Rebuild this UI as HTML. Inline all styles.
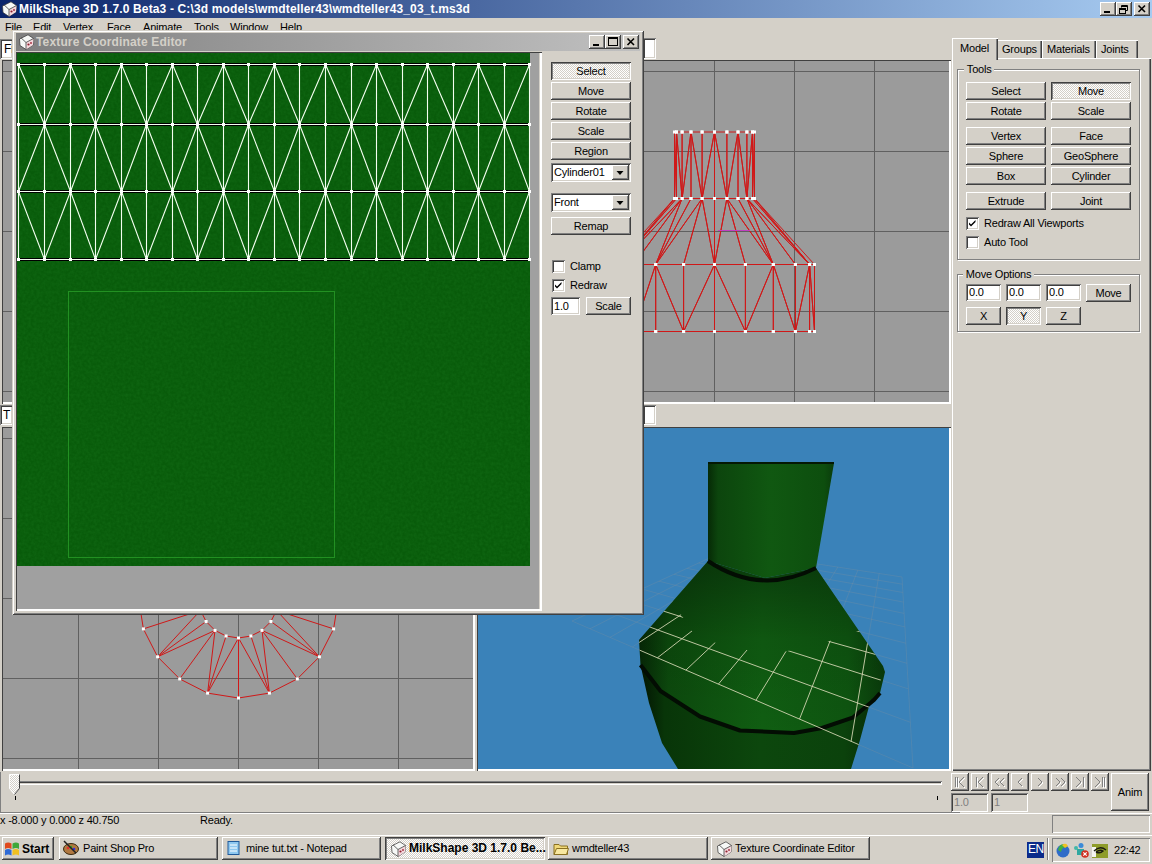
<!DOCTYPE html><html><head><meta charset="utf-8"><style>
*{margin:0;padding:0;box-sizing:border-box}
html,body{width:1152px;height:864px;overflow:hidden;background:#d4d0c8;font-family:"Liberation Sans",sans-serif;font-size:11px;color:#000;letter-spacing:-0.2px}
.t{position:absolute;white-space:nowrap;line-height:13px}
.btn{position:absolute;background:#d4d0c8;text-align:center;white-space:nowrap;
 box-shadow:inset -1px -1px #404040,inset 1px 1px #fff,inset -2px -2px #808080,inset 2px 2px #d4d0c8}
.chk{background-color:#fff;background-image:linear-gradient(45deg,#d4d0c8 25%,transparent 25%,transparent 75%,#d4d0c8 75%),linear-gradient(45deg,#d4d0c8 25%,transparent 25%,transparent 75%,#d4d0c8 75%);background-size:2px 2px;background-position:0 0,1px 1px;
 box-shadow:inset 1px 1px #404040,inset -1px -1px #fff,inset 2px 2px #808080,inset -2px -2px #d4d0c8}
.cb{position:absolute;width:13px;height:13px;background:#fff;box-shadow:inset 1px 1px #808080,inset -1px -1px #fff,inset 2px 2px #404040,inset -2px -2px #d4d0c8}
.ed{position:absolute;background:#fff;padding-left:3px;white-space:nowrap;box-shadow:inset 1px 1px #808080,inset -1px -1px #fff,inset 2px 2px #404040,inset -2px -2px #d4d0c8}
.sunk{position:absolute;box-shadow:inset 1px 1px #808080,inset -1px -1px #fff}
.grp{position:absolute;border:1px solid #808080;box-shadow:1px 1px #fff,inset 1px 1px #fff}
svg{position:absolute;left:0;top:0}
</style></head><body><div style="position:absolute;left:0px;top:0px;width:1152px;height:18px;background:linear-gradient(90deg,#0a246a,#a6caf0)"></div><svg style="left:1px;top:1px" width="16" height="16" viewBox="0 0 16 16"><path d="M1.5 5 L10 0.8 L15.5 4.5 L15 11 L8 15.5 L2 11.5Z" fill="#f6f8f6" stroke="#303030" stroke-width="0.7"/><path d="M8 8.5 L15.5 4.5 L15 11 L8 15.5Z" fill="#f4d8dc"/><path d="M3 3.8 L8 8.5 L8 15.5 M8 8.5 L15.5 4.5" stroke="#404040" stroke-width="0.8" fill="none"/><circle cx="10.5" cy="10.5" r="1.1" fill="#902030"/><circle cx="13" cy="9" r="0.9" fill="#a02838"/></svg><div class="t" style="left:19px;top:2px;color:#fff;font-weight:bold;font-size:12px;line-height:14px;letter-spacing:0.14px">MilkShape 3D 1.7.0 Beta3 - C:\3d models\wmdteller43\wmdteller43_03_t.ms3d</div><div class="btn" style="left:1100px;top:2px;width:16px;height:14px;line-height:14px;"><span style=""></span></div><div style="position:absolute;left:1104px;top:11px;width:6px;height:2px;background:#000"></div><div class="btn" style="left:1116px;top:2px;width:16px;height:14px;line-height:14px;"><span style=""></span></div><svg style="left:1116px;top:2px" width="16" height="14"><path d="M5.5 3.5h6v5h-2M5.5 3.5v2" fill="none" stroke="#000"/><path d="M5.5 4.5h6" stroke="#000"/><rect x="3.5" y="6.5" width="6" height="5" fill="none" stroke="#000"/><path d="M3.5 7.5h6" stroke="#000"/></svg><div class="btn" style="left:1134px;top:2px;width:16px;height:14px;line-height:14px;"><span style=""></span></div><svg style="left:1134px;top:2px" width="16" height="14"><path d="M4.5 3.5 L11 10 M11 3.5 L4.5 10" stroke="#000" stroke-width="1.6"/></svg><div class="t" style="left:5px;top:21px;">File</div><div class="t" style="left:33px;top:21px;">Edit</div><div class="t" style="left:63px;top:21px;">Vertex</div><div class="t" style="left:107px;top:21px;">Face</div><div class="t" style="left:143px;top:21px;">Animate</div><div class="t" style="left:194px;top:21px;">Tools</div><div class="t" style="left:230px;top:21px;">Window</div><div class="t" style="left:280px;top:21px;">Help</div><svg style="left:3px;top:61px" width="470" height="341" viewBox="3 61 470 341"><rect x="3" y="61" width="470" height="341" fill="#9b9b9b"/><path d="M78.5 61 V402" stroke="#606060" stroke-width="1"/><path d="M3 71.5 H473" stroke="#606060" stroke-width="1"/><path d="M158.5 61 V402" stroke="#606060" stroke-width="1"/><path d="M3 151.5 H473" stroke="#606060" stroke-width="1"/><path d="M238.5 61 V402" stroke="#606060" stroke-width="1"/><path d="M3 231.5 H473" stroke="#606060" stroke-width="1"/><path d="M318.5 61 V402" stroke="#606060" stroke-width="1"/><path d="M3 311.5 H473" stroke="#606060" stroke-width="1"/><path d="M398.5 61 V402" stroke="#606060" stroke-width="1"/><path d="M3 391.5 H473" stroke="#606060" stroke-width="1"/></svg><div style="position:absolute;left:2px;top:60px;width:473px;height:344px;box-shadow:inset 1px 1px #404040,inset -2px -2px #fff"></div><svg style="left:478px;top:61px" width="471" height="341" viewBox="478 61 471 341"><rect x="478" y="61" width="471" height="341" fill="#9b9b9b"/><path d="M554.5 61 V402" stroke="#606060" stroke-width="1"/><path d="M478 71.5 H949" stroke="#606060" stroke-width="1"/><path d="M634.5 61 V402" stroke="#606060" stroke-width="1"/><path d="M478 151.5 H949" stroke="#606060" stroke-width="1"/><path d="M714.5 61 V402" stroke="#606060" stroke-width="1"/><path d="M478 231.5 H949" stroke="#606060" stroke-width="1"/><path d="M794.5 61 V402" stroke="#606060" stroke-width="1"/><path d="M478 311.5 H949" stroke="#606060" stroke-width="1"/><path d="M874.5 61 V402" stroke="#606060" stroke-width="1"/><path d="M478 391.5 H949" stroke="#606060" stroke-width="1"/><path d="M674.5 132.0L754.5 132.0M674.5 198.5L754.5 198.5M614.5 264.5L814.5 264.5M614.5 331.5L814.5 331.5M754.5 132.0L754.5 198.5M752.5 132.0L752.5 198.5M752.5 132.0L754.5 198.5M752.5 132.0L746.9 198.5M746.9 132.0L746.9 198.5M738.0 132.0L738.0 198.5M738.0 132.0L746.9 198.5M738.0 132.0L726.9 198.5M726.9 132.0L726.9 198.5M714.5 132.0L714.5 198.5M714.5 132.0L726.9 198.5M714.5 132.0L702.1 198.5M702.1 132.0L702.1 198.5M691.0 132.0L691.0 198.5M691.0 132.0L702.1 198.5M691.0 132.0L682.1 198.5M682.1 132.0L682.1 198.5M676.5 132.0L676.5 198.5M676.5 132.0L682.1 198.5M676.5 132.0L674.5 198.5M674.5 132.0L674.5 198.5M676.5 132.0L676.5 198.5M676.5 132.0L674.5 198.5M676.5 132.0L682.1 198.5M682.1 132.0L682.1 198.5M691.0 132.0L691.0 198.5M691.0 132.0L682.1 198.5M691.0 132.0L702.1 198.5M702.1 132.0L702.1 198.5M714.5 132.0L714.5 198.5M714.5 132.0L702.1 198.5M714.5 132.0L726.9 198.5M726.9 132.0L726.9 198.5M738.0 132.0L738.0 198.5M738.0 132.0L726.9 198.5M738.0 132.0L746.9 198.5M746.9 132.0L746.9 198.5M752.5 132.0L752.5 198.5M752.5 132.0L746.9 198.5M752.5 132.0L754.5 198.5M754.5 198.5L814.5 264.5M754.5 198.5L809.6 264.5M754.5 198.5L809.6 264.5M752.5 198.5L809.6 264.5M746.9 198.5L795.4 264.5M746.9 198.5L809.6 264.5M746.9 198.5L773.3 264.5M738.0 198.5L773.3 264.5M726.9 198.5L745.4 264.5M726.9 198.5L773.3 264.5M726.9 198.5L714.5 264.5M714.5 198.5L714.5 264.5M702.1 198.5L683.6 264.5M702.1 198.5L714.5 264.5M702.1 198.5L655.7 264.5M691.0 198.5L655.7 264.5M682.1 198.5L633.6 264.5M682.1 198.5L655.7 264.5M682.1 198.5L619.4 264.5M676.5 198.5L619.4 264.5M674.5 198.5L614.5 264.5M674.5 198.5L619.4 264.5M674.5 198.5L619.4 264.5M676.5 198.5L619.4 264.5M682.1 198.5L633.6 264.5M682.1 198.5L619.4 264.5M682.1 198.5L655.7 264.5M691.0 198.5L655.7 264.5M702.1 198.5L683.6 264.5M702.1 198.5L655.7 264.5M702.1 198.5L714.5 264.5M714.5 198.5L714.5 264.5M726.9 198.5L745.4 264.5M726.9 198.5L714.5 264.5M726.9 198.5L773.3 264.5M738.0 198.5L773.3 264.5M746.9 198.5L795.4 264.5M746.9 198.5L773.3 264.5M746.9 198.5L809.6 264.5M752.5 198.5L809.6 264.5M814.5 264.5L814.5 331.5M809.6 264.5L809.6 331.5M809.6 264.5L814.5 331.5M809.6 264.5L795.4 331.5M795.4 264.5L795.4 331.5M773.3 264.5L773.3 331.5M773.3 264.5L795.4 331.5M773.3 264.5L745.4 331.5M745.4 264.5L745.4 331.5M714.5 264.5L714.5 331.5M714.5 264.5L745.4 331.5M714.5 264.5L683.6 331.5M683.6 264.5L683.6 331.5M655.7 264.5L655.7 331.5M655.7 264.5L683.6 331.5M655.7 264.5L633.6 331.5M633.6 264.5L633.6 331.5M619.4 264.5L619.4 331.5M619.4 264.5L633.6 331.5M619.4 264.5L614.5 331.5M614.5 264.5L614.5 331.5M619.4 264.5L619.4 331.5M619.4 264.5L614.5 331.5M619.4 264.5L633.6 331.5M633.6 264.5L633.6 331.5M655.7 264.5L655.7 331.5M655.7 264.5L633.6 331.5M655.7 264.5L683.6 331.5M683.6 264.5L683.6 331.5M714.5 264.5L714.5 331.5M714.5 264.5L683.6 331.5M714.5 264.5L745.4 331.5M745.4 264.5L745.4 331.5M773.3 264.5L773.3 331.5M773.3 264.5L745.4 331.5M773.3 264.5L795.4 331.5M795.4 264.5L795.4 331.5M809.6 264.5L809.6 331.5M809.6 264.5L795.4 331.5M809.6 264.5L814.5 331.5" stroke="#d01818" stroke-width="1" fill="none"/><rect x="753.0" y="130.5" width="3" height="3" fill="#fff"/><rect x="751.0" y="130.5" width="3" height="3" fill="#fff"/><rect x="745.4" y="130.5" width="3" height="3" fill="#fff"/><rect x="736.5" y="130.5" width="3" height="3" fill="#fff"/><rect x="725.4" y="130.5" width="3" height="3" fill="#fff"/><rect x="713.0" y="130.5" width="3" height="3" fill="#fff"/><rect x="700.6" y="130.5" width="3" height="3" fill="#fff"/><rect x="689.5" y="130.5" width="3" height="3" fill="#fff"/><rect x="680.6" y="130.5" width="3" height="3" fill="#fff"/><rect x="675.0" y="130.5" width="3" height="3" fill="#fff"/><rect x="673.0" y="130.5" width="3" height="3" fill="#fff"/><rect x="675.0" y="130.5" width="3" height="3" fill="#fff"/><rect x="680.6" y="130.5" width="3" height="3" fill="#fff"/><rect x="689.5" y="130.5" width="3" height="3" fill="#fff"/><rect x="700.6" y="130.5" width="3" height="3" fill="#fff"/><rect x="713.0" y="130.5" width="3" height="3" fill="#fff"/><rect x="725.4" y="130.5" width="3" height="3" fill="#fff"/><rect x="736.5" y="130.5" width="3" height="3" fill="#fff"/><rect x="745.4" y="130.5" width="3" height="3" fill="#fff"/><rect x="751.0" y="130.5" width="3" height="3" fill="#fff"/><rect x="753.0" y="197.0" width="3" height="3" fill="#fff"/><rect x="751.0" y="197.0" width="3" height="3" fill="#fff"/><rect x="745.4" y="197.0" width="3" height="3" fill="#fff"/><rect x="736.5" y="197.0" width="3" height="3" fill="#fff"/><rect x="725.4" y="197.0" width="3" height="3" fill="#fff"/><rect x="713.0" y="197.0" width="3" height="3" fill="#fff"/><rect x="700.6" y="197.0" width="3" height="3" fill="#fff"/><rect x="689.5" y="197.0" width="3" height="3" fill="#fff"/><rect x="680.6" y="197.0" width="3" height="3" fill="#fff"/><rect x="675.0" y="197.0" width="3" height="3" fill="#fff"/><rect x="673.0" y="197.0" width="3" height="3" fill="#fff"/><rect x="675.0" y="197.0" width="3" height="3" fill="#fff"/><rect x="680.6" y="197.0" width="3" height="3" fill="#fff"/><rect x="689.5" y="197.0" width="3" height="3" fill="#fff"/><rect x="700.6" y="197.0" width="3" height="3" fill="#fff"/><rect x="713.0" y="197.0" width="3" height="3" fill="#fff"/><rect x="725.4" y="197.0" width="3" height="3" fill="#fff"/><rect x="736.5" y="197.0" width="3" height="3" fill="#fff"/><rect x="745.4" y="197.0" width="3" height="3" fill="#fff"/><rect x="751.0" y="197.0" width="3" height="3" fill="#fff"/><rect x="813.0" y="263.0" width="3" height="3" fill="#fff"/><rect x="808.1" y="263.0" width="3" height="3" fill="#fff"/><rect x="793.9" y="263.0" width="3" height="3" fill="#fff"/><rect x="771.8" y="263.0" width="3" height="3" fill="#fff"/><rect x="743.9" y="263.0" width="3" height="3" fill="#fff"/><rect x="713.0" y="263.0" width="3" height="3" fill="#fff"/><rect x="682.1" y="263.0" width="3" height="3" fill="#fff"/><rect x="654.2" y="263.0" width="3" height="3" fill="#fff"/><rect x="632.1" y="263.0" width="3" height="3" fill="#fff"/><rect x="617.9" y="263.0" width="3" height="3" fill="#fff"/><rect x="613.0" y="263.0" width="3" height="3" fill="#fff"/><rect x="617.9" y="263.0" width="3" height="3" fill="#fff"/><rect x="632.1" y="263.0" width="3" height="3" fill="#fff"/><rect x="654.2" y="263.0" width="3" height="3" fill="#fff"/><rect x="682.1" y="263.0" width="3" height="3" fill="#fff"/><rect x="713.0" y="263.0" width="3" height="3" fill="#fff"/><rect x="743.9" y="263.0" width="3" height="3" fill="#fff"/><rect x="771.8" y="263.0" width="3" height="3" fill="#fff"/><rect x="793.9" y="263.0" width="3" height="3" fill="#fff"/><rect x="808.1" y="263.0" width="3" height="3" fill="#fff"/><rect x="813.0" y="330.0" width="3" height="3" fill="#fff"/><rect x="808.1" y="330.0" width="3" height="3" fill="#fff"/><rect x="793.9" y="330.0" width="3" height="3" fill="#fff"/><rect x="771.8" y="330.0" width="3" height="3" fill="#fff"/><rect x="743.9" y="330.0" width="3" height="3" fill="#fff"/><rect x="713.0" y="330.0" width="3" height="3" fill="#fff"/><rect x="682.1" y="330.0" width="3" height="3" fill="#fff"/><rect x="654.2" y="330.0" width="3" height="3" fill="#fff"/><rect x="632.1" y="330.0" width="3" height="3" fill="#fff"/><rect x="617.9" y="330.0" width="3" height="3" fill="#fff"/><rect x="613.0" y="330.0" width="3" height="3" fill="#fff"/><rect x="617.9" y="330.0" width="3" height="3" fill="#fff"/><rect x="632.1" y="330.0" width="3" height="3" fill="#fff"/><rect x="654.2" y="330.0" width="3" height="3" fill="#fff"/><rect x="682.1" y="330.0" width="3" height="3" fill="#fff"/><rect x="713.0" y="330.0" width="3" height="3" fill="#fff"/><rect x="743.9" y="330.0" width="3" height="3" fill="#fff"/><rect x="771.8" y="330.0" width="3" height="3" fill="#fff"/><rect x="793.9" y="330.0" width="3" height="3" fill="#fff"/><rect x="808.1" y="330.0" width="3" height="3" fill="#fff"/><path d="M718 230.5H750" stroke="#c040c0" stroke-width="1"/></svg><div style="position:absolute;left:477px;top:60px;width:474px;height:344px;box-shadow:inset 1px 1px #404040,inset -2px -2px #fff"></div><svg style="left:3px;top:428px" width="470" height="341" viewBox="3 428 470 341"><rect x="3" y="428" width="470" height="341" fill="#9b9b9b"/><path d="M78.5 428 V769" stroke="#606060" stroke-width="1"/><path d="M3 438.5 H473" stroke="#606060" stroke-width="1"/><path d="M158.5 428 V769" stroke="#606060" stroke-width="1"/><path d="M3 518.5 H473" stroke="#606060" stroke-width="1"/><path d="M238.5 428 V769" stroke="#606060" stroke-width="1"/><path d="M3 598.5 H473" stroke="#606060" stroke-width="1"/><path d="M318.5 428 V769" stroke="#606060" stroke-width="1"/><path d="M3 678.5 H473" stroke="#606060" stroke-width="1"/><path d="M398.5 428 V769" stroke="#606060" stroke-width="1"/><path d="M3 758.5 H473" stroke="#606060" stroke-width="1"/><path d="M278.5 598.0L276.5 610.4M276.5 610.4L270.9 621.5M270.9 621.5L262.0 630.4M262.0 630.4L250.9 636.0M250.9 636.0L238.5 638.0M238.5 638.0L226.1 636.0M226.1 636.0L215.0 630.4M215.0 630.4L206.1 621.5M206.1 621.5L200.5 610.4M200.5 610.4L198.5 598.0M198.5 598.0L200.5 585.6M200.5 585.6L206.1 574.5M206.1 574.5L215.0 565.6M215.0 565.6L226.1 560.0M226.1 560.0L238.5 558.0M238.5 558.0L250.9 560.0M250.9 560.0L262.0 565.6M262.0 565.6L270.9 574.5M270.9 574.5L276.5 585.6M276.5 585.6L278.5 598.0M338.5 598.0L333.6 628.9M333.6 628.9L319.4 656.8M319.4 656.8L297.3 678.9M297.3 678.9L269.4 693.1M269.4 693.1L238.5 698.0M238.5 698.0L207.6 693.1M207.6 693.1L179.7 678.9M179.7 678.9L157.6 656.8M157.6 656.8L143.4 628.9M143.4 628.9L138.5 598.0M138.5 598.0L143.4 567.1M143.4 567.1L157.6 539.2M157.6 539.2L179.7 517.1M179.7 517.1L207.6 502.9M207.6 502.9L238.5 498.0M238.5 498.0L269.4 502.9M269.4 502.9L297.3 517.1M297.3 517.1L319.4 539.2M319.4 539.2L333.6 567.1M333.6 567.1L338.5 598.0M278.5 598.0L338.5 598.0M276.5 610.4L333.6 628.9M276.5 610.4L338.5 598.0M276.5 610.4L319.4 656.8M270.9 621.5L319.4 656.8M262.0 630.4L297.3 678.9M262.0 630.4L319.4 656.8M262.0 630.4L269.4 693.1M250.9 636.0L269.4 693.1M238.5 638.0L238.5 698.0M238.5 638.0L269.4 693.1M238.5 638.0L207.6 693.1M226.1 636.0L207.6 693.1M215.0 630.4L179.7 678.9M215.0 630.4L207.6 693.1M215.0 630.4L157.6 656.8M206.1 621.5L157.6 656.8M200.5 610.4L143.4 628.9M200.5 610.4L157.6 656.8M200.5 610.4L138.5 598.0M198.5 598.0L138.5 598.0M200.5 585.6L143.4 567.1M200.5 585.6L138.5 598.0M200.5 585.6L157.6 539.2M206.1 574.5L157.6 539.2M215.0 565.6L179.7 517.1M215.0 565.6L157.6 539.2M215.0 565.6L207.6 502.9M226.1 560.0L207.6 502.9M238.5 558.0L238.5 498.0M238.5 558.0L207.6 502.9M238.5 558.0L269.4 502.9M250.9 560.0L269.4 502.9M262.0 565.6L297.3 517.1M262.0 565.6L269.4 502.9M262.0 565.6L319.4 539.2M270.9 574.5L319.4 539.2M276.5 585.6L333.6 567.1M276.5 585.6L319.4 539.2M276.5 585.6L338.5 598.0" stroke="#d01818" stroke-width="1" fill="none"/><rect x="277.0" y="596.5" width="3" height="3" fill="#fff"/><rect x="275.0" y="608.9" width="3" height="3" fill="#fff"/><rect x="269.4" y="620.0" width="3" height="3" fill="#fff"/><rect x="260.5" y="628.9" width="3" height="3" fill="#fff"/><rect x="249.4" y="634.5" width="3" height="3" fill="#fff"/><rect x="237.0" y="636.5" width="3" height="3" fill="#fff"/><rect x="224.6" y="634.5" width="3" height="3" fill="#fff"/><rect x="213.5" y="628.9" width="3" height="3" fill="#fff"/><rect x="204.6" y="620.0" width="3" height="3" fill="#fff"/><rect x="199.0" y="608.9" width="3" height="3" fill="#fff"/><rect x="197.0" y="596.5" width="3" height="3" fill="#fff"/><rect x="199.0" y="584.1" width="3" height="3" fill="#fff"/><rect x="204.6" y="573.0" width="3" height="3" fill="#fff"/><rect x="213.5" y="564.1" width="3" height="3" fill="#fff"/><rect x="224.6" y="558.5" width="3" height="3" fill="#fff"/><rect x="237.0" y="556.5" width="3" height="3" fill="#fff"/><rect x="249.4" y="558.5" width="3" height="3" fill="#fff"/><rect x="260.5" y="564.1" width="3" height="3" fill="#fff"/><rect x="269.4" y="573.0" width="3" height="3" fill="#fff"/><rect x="275.0" y="584.1" width="3" height="3" fill="#fff"/><rect x="337.0" y="596.5" width="3" height="3" fill="#fff"/><rect x="332.1" y="627.4" width="3" height="3" fill="#fff"/><rect x="317.9" y="655.3" width="3" height="3" fill="#fff"/><rect x="295.8" y="677.4" width="3" height="3" fill="#fff"/><rect x="267.9" y="691.6" width="3" height="3" fill="#fff"/><rect x="237.0" y="696.5" width="3" height="3" fill="#fff"/><rect x="206.1" y="691.6" width="3" height="3" fill="#fff"/><rect x="178.2" y="677.4" width="3" height="3" fill="#fff"/><rect x="156.1" y="655.3" width="3" height="3" fill="#fff"/><rect x="141.9" y="627.4" width="3" height="3" fill="#fff"/><rect x="137.0" y="596.5" width="3" height="3" fill="#fff"/><rect x="141.9" y="565.6" width="3" height="3" fill="#fff"/><rect x="156.1" y="537.7" width="3" height="3" fill="#fff"/><rect x="178.2" y="515.6" width="3" height="3" fill="#fff"/><rect x="206.1" y="501.4" width="3" height="3" fill="#fff"/><rect x="237.0" y="496.5" width="3" height="3" fill="#fff"/><rect x="267.9" y="501.4" width="3" height="3" fill="#fff"/><rect x="295.8" y="515.6" width="3" height="3" fill="#fff"/><rect x="317.9" y="537.7" width="3" height="3" fill="#fff"/><rect x="332.1" y="565.6" width="3" height="3" fill="#fff"/></svg><div style="position:absolute;left:2px;top:427px;width:473px;height:344px;box-shadow:inset 1px 1px #404040,inset -2px -2px #fff"></div><svg style="left:478px;top:428px" width="471" height="341" viewBox="478 428 471 341"><rect x="478" y="428" width="471" height="341" fill="#3a82b9"/><defs><linearGradient id="gneck" x1="0" x2="1"><stop offset="0" stop-color="#062a06"/><stop offset="0.08" stop-color="#0c450d"/><stop offset="0.5" stop-color="#105811"/><stop offset="0.92" stop-color="#0d4e0e"/><stop offset="1" stop-color="#0a3c0b"/></linearGradient><linearGradient id="gsh" x1="0" x2="1" y1="0" y2="0"><stop offset="0" stop-color="#062806"/><stop offset="0.12" stop-color="#0c4a0d"/><stop offset="0.5" stop-color="#105e12"/><stop offset="0.85" stop-color="#0e5510"/><stop offset="1" stop-color="#093a0a"/></linearGradient><linearGradient id="gshv" x1="0" x2="0" y1="0" y2="1"><stop offset="0" stop-color="#000" stop-opacity="0.35"/><stop offset="0.45" stop-color="#000" stop-opacity="0.08"/><stop offset="1" stop-color="#000" stop-opacity="0"/></linearGradient><linearGradient id="gbody" x1="0" x2="1" y1="0" y2="0"><stop offset="0" stop-color="#031503"/><stop offset="0.1" stop-color="#083508"/><stop offset="0.5" stop-color="#0c470d"/><stop offset="0.85" stop-color="#0b420c"/><stop offset="1" stop-color="#072a07"/></linearGradient><clipPath id="csil"><polygon points="708,463 834,463 816,568 883,666 885,672 871,699 860,740 851,769 678,769 662,743 649,703 641,668 639,640 708,561"/></clipPath><clipPath id="cfront"><polygon points="600,585 650,590 672,601 692,631 716,643 746,650 783,652 827,642 866,628 895,612 900,790 600,790"/></clipPath></defs><path d="M727.0 550.0L572.0 621.0M727.0 550.0L902.0 577.0M740.3 552.1L590.0 628.8M718.5 553.9L902.4 584.2M754.3 554.2L610.0 637.4M709.1 558.2L902.9 592.5M769.1 556.5L632.3 647.0M698.7 563.0L903.4 602.1M784.8 558.9L657.4 657.8M687.0 568.3L904.1 613.4M801.4 561.5L685.9 670.1M673.9 574.3L904.9 626.9M819.1 564.2L718.4 684.1M659.0 581.2L905.8 643.2M837.8 567.1L755.9 700.3M641.9 589.0L907.0 663.3M857.8 570.2L799.5 719.1M622.2 598.0L908.4 688.9M879.2 573.5L851.1 741.3M599.2 608.5L910.4 722.3M902.0 577.0L913.0 768.0M572.0 621.0L913.0 768.0" stroke="#8a929a" stroke-width="1" fill="none" opacity="0.25"/><polygon points="708,463 834,463 816,568 765,578 708,561" fill="url(#gneck)"/><polygon points="708,561 765,578 816,568 883,666 885,672 880,693 874,700 852.6,717.7 822,728 794,733 740,730.5 700,716.5 660.5,691 640.5,665 639,640" fill="url(#gsh)"/><polygon points="708,561 765,578 816,568 883,666 885,672 880,693 874,700 852.6,717.7 822,728 794,733 740,730.5 700,716.5 660.5,691 640.5,665 639,640" fill="url(#gshv)"/><polygon points="640.5,665 660.5,691 700,716.5 740,730.5 794,733 822,728 852.6,717.7 874,700 880,693 871,699 860,740 851,769 678,769 662,743 649,703" fill="url(#gbody)"/><path d="M708,463H834" stroke="#041804" stroke-width="2"/><path d="M708,561 Q760,596 816,568" stroke="#030d03" stroke-width="4" fill="none"/><path d="M640.5,665 L660.5,691 L700,716.5 L740,730.5 L794,733 L822,728 L852.6,717.7 L874,700 L880,693" stroke="#030d03" stroke-width="4" stroke-linejoin="round" fill="none"/><g clip-path="url(#csil)"><g clip-path="url(#cfront)"><path d="M727.0 550.0L572.0 621.0M727.0 550.0L902.0 577.0M740.3 552.1L590.0 628.8M718.5 553.9L902.4 584.2M754.3 554.2L610.0 637.4M709.1 558.2L902.9 592.5M769.1 556.5L632.3 647.0M698.7 563.0L903.4 602.1M784.8 558.9L657.4 657.8M687.0 568.3L904.1 613.4M801.4 561.5L685.9 670.1M673.9 574.3L904.9 626.9M819.1 564.2L718.4 684.1M659.0 581.2L905.8 643.2M837.8 567.1L755.9 700.3M641.9 589.0L907.0 663.3M857.8 570.2L799.5 719.1M622.2 598.0L908.4 688.9M879.2 573.5L851.1 741.3M599.2 608.5L910.4 722.3M902.0 577.0L913.0 768.0M572.0 621.0L913.0 768.0" stroke="#d0d4b0" stroke-width="0.9" fill="none"/></g></g></svg><div style="position:absolute;left:477px;top:427px;width:474px;height:344px;box-shadow:inset 1px 1px #404040,inset -2px -2px #fff"></div><div class="ed" style="left:0px;top:39px;width:13px;height:20px;line-height:20px;padding-left:4px;overflow:hidden;font-size:12px;letter-spacing:0">Fr</div><div class="ed" style="left:643px;top:38px;width:13px;height:21px;line-height:21px;"></div><div class="ed" style="left:0px;top:405px;width:13px;height:20px;line-height:20px;padding-left:3px;overflow:hidden;font-size:12px;letter-spacing:0">T</div><div class="ed" style="left:643px;top:405px;width:13px;height:20px;line-height:20px;"></div><div style="position:absolute;left:952px;top:58px;width:199px;height:713px;background:#d4d0c8;box-shadow:inset 1px 1px #fff,inset -1px -1px #404040,inset -2px -2px #808080"></div><div style="position:absolute;left:997px;top:40px;width:45px;height:18px;background:#d4d0c8;box-shadow:inset 1px 1px #fff,inset -1px 0 #404040,inset -2px 0 #808080"></div><div class="t" style="left:1002px;top:43px;">Groups</div><div style="position:absolute;left:1042px;top:40px;width:54px;height:18px;background:#d4d0c8;box-shadow:inset 1px 1px #fff,inset -1px 0 #404040,inset -2px 0 #808080"></div><div class="t" style="left:1047px;top:43px;">Materials</div><div style="position:absolute;left:1096px;top:40px;width:42px;height:18px;background:#d4d0c8;box-shadow:inset 1px 1px #fff,inset -1px 0 #404040,inset -2px 0 #808080"></div><div class="t" style="left:1101px;top:43px;">Joints</div><div style="position:absolute;left:952px;top:38px;width:46px;height:22px;background:#d4d0c8;box-shadow:inset 1px 1px #fff,inset -1px 0 #404040,inset -2px 0 #808080"></div><div class="t" style="left:960px;top:42px;">Model</div><div class="grp" style="left:957px;top:69px;width:183px;height:191px"></div><div class="t" style="left:964px;top:63px;background:#d4d0c8">&nbsp;Tools&nbsp;</div><div class="btn" style="left:966px;top:82px;width:80px;height:18px;line-height:18px;"><span style="">Select</span></div><div class="btn chk" style="left:1051px;top:82px;width:80px;height:18px;line-height:18px;"><span style="">Move</span></div><div class="btn" style="left:966px;top:102px;width:80px;height:18px;line-height:18px;"><span style="">Rotate</span></div><div class="btn" style="left:1051px;top:102px;width:80px;height:18px;line-height:18px;"><span style="">Scale</span></div><div class="btn" style="left:966px;top:127px;width:80px;height:18px;line-height:18px;"><span style="">Vertex</span></div><div class="btn" style="left:1051px;top:127px;width:80px;height:18px;line-height:18px;"><span style="">Face</span></div><div class="btn" style="left:966px;top:147px;width:80px;height:18px;line-height:18px;"><span style="">Sphere</span></div><div class="btn" style="left:1051px;top:147px;width:80px;height:18px;line-height:18px;"><span style="">GeoSphere</span></div><div class="btn" style="left:966px;top:167px;width:80px;height:18px;line-height:18px;"><span style="">Box</span></div><div class="btn" style="left:1051px;top:167px;width:80px;height:18px;line-height:18px;"><span style="">Cylinder</span></div><div class="btn" style="left:966px;top:192px;width:80px;height:18px;line-height:18px;"><span style="">Extrude</span></div><div class="btn" style="left:1051px;top:192px;width:80px;height:18px;line-height:18px;"><span style="">Joint</span></div><div class="cb" style="left:966px;top:217px"><svg width="13" height="13" style="position:absolute;left:0;top:0"><path d="M3 5.5 L5 7.5 L9.5 3 L9.5 5 L5 9.5 L3 7.5Z" fill="#000"/></svg></div><div class="t" style="left:984px;top:217px;">Redraw All Viewports</div><div class="cb" style="left:966px;top:236px"></div><div class="t" style="left:984px;top:236px;">Auto Tool</div><div class="grp" style="left:957px;top:274px;width:183px;height:58px"></div><div class="t" style="left:963px;top:268px;background:#d4d0c8">&nbsp;Move Options&nbsp;</div><div class="ed" style="left:966px;top:284px;width:35px;height:17px;line-height:17px;">0.0</div><div class="ed" style="left:1006px;top:284px;width:35px;height:17px;line-height:17px;">0.0</div><div class="ed" style="left:1046px;top:284px;width:35px;height:17px;line-height:17px;">0.0</div><div class="btn" style="left:1086px;top:284px;width:45px;height:18px;line-height:18px;"><span style="">Move</span></div><div class="btn" style="left:966px;top:307px;width:35px;height:18px;line-height:18px;"><span style="">X</span></div><div class="btn chk" style="left:1006px;top:307px;width:35px;height:18px;line-height:18px;"><span style="">Y</span></div><div class="btn" style="left:1046px;top:307px;width:35px;height:18px;line-height:18px;"><span style="">Z</span></div><div style="position:absolute;left:0px;top:772px;width:960px;height:41px;box-shadow:inset 1px 0 #808080,inset 0 -1px #808080"></div><div style="position:absolute;left:12px;top:781px;width:930px;height:4px;box-shadow:inset 1px 1px #808080,inset -1px -1px #fff,inset 2px 2px #404040"></div><svg style="left:9px;top:774px" width="12" height="24"><path d="M0.5 0.5H10.5V14.5L5.5 20.5L0.5 14.5Z" fill="url(#dith)" stroke="#fff"/><path d="M10.5 0.5V14.5L5.5 20.5" stroke="#404040" fill="none"/><defs><pattern id="dith" width="2" height="2" patternUnits="userSpaceOnUse"><rect width="2" height="2" fill="#d4d0c8"/><rect width="1" height="1" fill="#fff"/><rect x="1" y="1" width="1" height="1" fill="#fff"/></pattern></defs></svg><div style="position:absolute;left:15px;top:796px;width:1px;height:4px;background:#000"></div><div style="position:absolute;left:937px;top:796px;width:1px;height:4px;background:#000"></div><div class="btn" style="left:951px;top:773px;width:18px;height:18px;line-height:18px;color:#808080"><span style=""></span></div><div class="btn" style="left:971px;top:773px;width:18px;height:18px;line-height:18px;color:#808080"><span style=""></span></div><div class="btn" style="left:991px;top:773px;width:18px;height:18px;line-height:18px;color:#808080"><span style=""></span></div><div class="btn" style="left:1011px;top:773px;width:18px;height:18px;line-height:18px;color:#808080"><span style=""></span></div><div class="btn" style="left:1031px;top:773px;width:18px;height:18px;line-height:18px;color:#808080"><span style=""></span></div><div class="btn" style="left:1051px;top:773px;width:18px;height:18px;line-height:18px;color:#808080"><span style=""></span></div><div class="btn" style="left:1071px;top:773px;width:18px;height:18px;line-height:18px;color:#808080"><span style=""></span></div><div class="btn" style="left:1091px;top:773px;width:18px;height:18px;line-height:18px;color:#808080"><span style=""></span></div><svg style="left:951px;top:773px" width="18" height="18"><path d="M4.5 4v10M6.5 4v10M13 4L8 9L13 14" stroke="#fff" stroke-width="1" fill="none" transform="translate(1,1)"/><path d="M4.5 4v10M6.5 4v10M13 4L8 9L13 14" stroke="#808080" stroke-width="1" fill="none"/></svg><svg style="left:971px;top:773px" width="18" height="18"><path d="M5.5 4v10M12 4L7 9L12 14" stroke="#fff" stroke-width="1" fill="none" transform="translate(1,1)"/><path d="M5.5 4v10M12 4L7 9L12 14" stroke="#808080" stroke-width="1" fill="none"/></svg><svg style="left:991px;top:773px" width="18" height="18"><path d="M8 5L4 9L8 13M13 5L9 9L13 13" stroke="#fff" stroke-width="1" fill="none" transform="translate(1,1)"/><path d="M8 5L4 9L8 13M13 5L9 9L13 13" stroke="#808080" stroke-width="1" fill="none"/></svg><svg style="left:1011px;top:773px" width="18" height="18"><path d="M11 5L7 9L11 13" stroke="#fff" stroke-width="1" fill="none" transform="translate(1,1)"/><path d="M11 5L7 9L11 13" stroke="#808080" stroke-width="1" fill="none"/></svg><svg style="left:1031px;top:773px" width="18" height="18"><path d="M7 5L11 9L7 13" stroke="#fff" stroke-width="1" fill="none" transform="translate(1,1)"/><path d="M7 5L11 9L7 13" stroke="#808080" stroke-width="1" fill="none"/></svg><svg style="left:1051px;top:773px" width="18" height="18"><path d="M5 5L9 9L5 13M10 5L14 9L10 13" stroke="#fff" stroke-width="1" fill="none" transform="translate(1,1)"/><path d="M5 5L9 9L5 13M10 5L14 9L10 13" stroke="#808080" stroke-width="1" fill="none"/></svg><svg style="left:1071px;top:773px" width="18" height="18"><path d="M5 4L10 9L5 14M12.5 4v10" stroke="#fff" stroke-width="1" fill="none" transform="translate(1,1)"/><path d="M5 4L10 9L5 14M12.5 4v10" stroke="#808080" stroke-width="1" fill="none"/></svg><svg style="left:1091px;top:773px" width="18" height="18"><path d="M4 4L9 9L4 14M11.5 4v10M13.5 4v10" stroke="#fff" stroke-width="1" fill="none" transform="translate(1,1)"/><path d="M4 4L9 9L4 14M11.5 4v10M13.5 4v10" stroke="#808080" stroke-width="1" fill="none"/></svg><div class="ed" style="left:951px;top:793px;width:37px;height:19px;line-height:19px;background:#d4d0c8;color:#808080;font-size:11px">1.0</div><div class="ed" style="left:991px;top:793px;width:37px;height:19px;line-height:19px;background:#d4d0c8;color:#808080">1</div><div class="btn" style="left:1111px;top:773px;width:38px;height:38px;line-height:38px;"><span style="">Anim</span></div><div style="position:absolute;left:0px;top:813px;width:1152px;height:1px;background:#fff"></div><div class="t" style="left:0px;top:814px;">x -8.000 y 0.000 z 40.750</div><div class="t" style="left:200px;top:814px;">Ready.</div><div style="position:absolute;left:1052px;top:815px;width:98px;height:18px;box-shadow:inset 1px 1px #808080,inset -1px -1px #fff"></div><div style="position:absolute;left:0px;top:834px;width:1152px;height:30px;background:#d4d0c8;box-shadow:inset 0 1px #d4d0c8,inset 0 2px #fff"></div><div class="btn" style="left:2px;top:837px;width:52px;height:23px"></div><svg style="left:3px;top:841px" width="18" height="16"><path d="M2 2.5 Q5 0.5 8.5 2.5 V8 Q5 6 2 8Z" fill="#e04a1e"/><path d="M9.5 2.5 Q13 0.5 16 2.5 V8 Q13 6 9.5 8Z" fill="#3fa83a"/><path d="M2 9 Q5 7 8.5 9 V14.5 Q5 12.5 2 14.5Z" fill="#2f6bd6"/><path d="M9.5 9 Q13 7 16 9 V14.5 Q13 12.5 9.5 14.5Z" fill="#f0c020"/></svg><div class="t" style="left:22px;top:843px;font-weight:bold;font-size:12px;letter-spacing:0">Start</div><div class="btn" style="left:59px;top:837px;width:159px;height:23px"></div><div class="t" style="left:83px;top:842px;">Paint Shop Pro</div><svg style="left:62px;top:840px" width="18" height="16"><ellipse cx="9" cy="9" rx="7.5" ry="5.5" fill="#b07840" stroke="#3a2a10"/><circle cx="6" cy="8" r="1.3" fill="#e03030"/><circle cx="9" cy="7" r="1.3" fill="#30a030"/><circle cx="12" cy="9" r="1.3" fill="#3030e0"/><path d="M2 1 L14 13" stroke="#222" stroke-width="1.5"/></svg><div class="btn" style="left:222px;top:837px;width:159px;height:23px"></div><div class="t" style="left:246px;top:842px;">mine tut.txt - Notepad</div><svg style="left:226px;top:840px" width="16" height="16"><rect x="2" y="1.5" width="11" height="13" fill="#8ec8f0" stroke="#205a9a"/><path d="M4 5h7M4 8h7M4 11h7" stroke="#fff"/></svg><div class="chk" style="position:absolute;left:385px;top:837px;width:160px;height:23px"></div><div class="t" style="left:409px;top:842px;font-weight:bold;font-size:12px;letter-spacing:0">MilkShape 3D 1.7.0 Be...</div><svg style="left:390px;top:841px" width="16" height="16" viewBox="0 0 16 16"><path d="M1.5 5 L10 0.8 L15.5 4.5 L15 11 L8 15.5 L2 11.5Z" fill="#f6f8f6" stroke="#303030" stroke-width="0.7"/><path d="M8 8.5 L15.5 4.5 L15 11 L8 15.5Z" fill="#f4d8dc"/><path d="M3 3.8 L8 8.5 L8 15.5 M8 8.5 L15.5 4.5" stroke="#404040" stroke-width="0.8" fill="none"/><circle cx="10.5" cy="10.5" r="1.1" fill="#902030"/><circle cx="13" cy="9" r="0.9" fill="#a02838"/></svg><div class="btn" style="left:548px;top:837px;width:160px;height:23px"></div><div class="t" style="left:572px;top:842px;">wmdteller43</div><svg style="left:553px;top:841px" width="16" height="15"><path d="M1 3.5h5l1.5 1.5h7v8.5h-13.5z" fill="#f0d878" stroke="#8a7020"/><path d="M1 13.5l2.5-6h12l-2 6z" fill="#f8e8a0" stroke="#8a7020"/></svg><div class="btn" style="left:711px;top:837px;width:159px;height:23px"></div><div class="t" style="left:735px;top:842px;">Texture Coordinate Editor</div><svg style="left:716px;top:841px" width="16" height="16" viewBox="0 0 16 16"><path d="M1.5 5 L10 0.8 L15.5 4.5 L15 11 L8 15.5 L2 11.5Z" fill="#f6f8f6" stroke="#303030" stroke-width="0.7"/><path d="M8 8.5 L15.5 4.5 L15 11 L8 15.5Z" fill="#f4d8dc"/><path d="M3 3.8 L8 8.5 L8 15.5 M8 8.5 L15.5 4.5" stroke="#404040" stroke-width="0.8" fill="none"/><circle cx="10.5" cy="10.5" r="1.1" fill="#902030"/><circle cx="13" cy="9" r="0.9" fill="#a02838"/></svg><div style="position:absolute;left:1047px;top:838px;width:1px;height:22px;background:#808080"></div><div style="position:absolute;left:1048px;top:838px;width:1px;height:22px;background:#fff"></div><div style="position:absolute;left:1027px;top:842px;width:17px;height:16px;background:#0b2a8a"></div><div class="t" style="left:1028px;top:843px;color:#fff;font-size:12px;letter-spacing:-0.6px">EN</div><div style="position:absolute;left:1052px;top:838px;width:98px;height:24px;box-shadow:inset 1px 1px #808080,inset -1px -1px #fff"></div><svg style="left:1055px;top:841px" width="54" height="18"><circle cx="8" cy="10" r="6.5" fill="#2f6cc8"/><path d="M3 9 Q4 3 9 3 L11 6 Q7 6 6 11Z" fill="#40b040"/><path d="M7 4 Q11 1 13 5 L10 7Z" fill="#f0c020"/><circle cx="26" cy="4.5" r="2.5" fill="#3a8ad8"/><path d="M22 8h7v6h-7z" fill="#30a8a0"/><circle cx="21" cy="7" r="2" fill="#40b8a8"/><circle cx="30" cy="13" r="3.8" fill="#d03020"/><path d="M28.3 11.3l3.4 3.4M31.7 11.3l-3.4 3.4" stroke="#fff" stroke-width="1.2"/><rect x="37" y="3" width="16" height="14" fill="#8e9c2a"/><rect x="37" y="6" width="4" height="10" fill="#f4f4f0"/><path d="M39 10 Q45 4 51 9 M41 11 Q45 8 48 10 Q45 13 41 11" stroke="#1a1a10" stroke-width="1.4" fill="none"/></svg><div class="t" style="left:1114px;top:844px;">22:42</div><div style="position:absolute;left:12px;top:30px;width:632px;height:585px;background:#d4d0c8;box-shadow:inset 1px 1px #d4d0c8,inset -1px -1px #404040,inset 2px 2px #fff,inset -2px -2px #808080"></div><div style="position:absolute;left:16px;top:33px;width:624px;height:18px;background:linear-gradient(90deg,#808080,#c0c0c0)"></div><svg style="left:18px;top:34px" width="16" height="16" viewBox="0 0 16 16"><path d="M1.5 5 L10 0.8 L15.5 4.5 L15 11 L8 15.5 L2 11.5Z" fill="#f6f8f6" stroke="#303030" stroke-width="0.7"/><path d="M8 8.5 L15.5 4.5 L15 11 L8 15.5Z" fill="#f4d8dc"/><path d="M3 3.8 L8 8.5 L8 15.5 M8 8.5 L15.5 4.5" stroke="#404040" stroke-width="0.8" fill="none"/><circle cx="10.5" cy="10.5" r="1.1" fill="#902030"/><circle cx="13" cy="9" r="0.9" fill="#a02838"/></svg><div class="t" style="left:36px;top:35px;color:#d4d0c8;font-weight:bold;font-size:12px;line-height:14px;letter-spacing:0.15px">Texture Coordinate Editor</div><div class="btn" style="left:589px;top:35px;width:16px;height:14px;line-height:14px;"><span style=""></span></div><div style="position:absolute;left:593px;top:44px;width:6px;height:2px;background:#000"></div><div class="btn" style="left:605px;top:35px;width:16px;height:14px;line-height:14px;"><span style=""></span></div><svg style="left:605px;top:35px" width="16" height="14"><rect x="3.5" y="2.5" width="9" height="8" fill="none" stroke="#000"/><path d="M3.5 3.5h9" stroke="#000"/></svg><div class="btn" style="left:623px;top:35px;width:16px;height:14px;line-height:14px;"><span style=""></span></div><svg style="left:623px;top:35px" width="16" height="14"><path d="M4.5 3.5 L11 10 M11 3.5 L4.5 10" stroke="#000" stroke-width="1.6"/></svg><svg style="left:0;top:0" width="545" height="615"><rect x="17" y="53" width="522" height="557" fill="#a0a0a0"/><defs><filter id="noise" x="0" y="0" width="100%" height="100%"><feTurbulence type="fractalNoise" baseFrequency="0.35" numOctaves="2" seed="3"/><feColorMatrix values="0 0 0 0 0.04  0 0 0 0 0.38  0 0 0 0 0.05  0 0 0 -1.2 0.9"/></filter></defs><rect x="17" y="53" width="513" height="513" fill="#085b0a"/><rect x="17" y="53" width="513" height="513" fill="#0a600c" filter="url(#noise)" opacity="0.18"/><rect x="68.5" y="291.5" width="266" height="266" fill="none" stroke="#229022" stroke-width="1"/><path d="M18.5 64.5H529.5M18.5 124.5H529.5M18.5 191.5H529.5M18.5 259.5H529.5" stroke="#000" stroke-width="3"/><path d="M18.5 64.5H529.5M18.5 124.5H529.5M18.5 191.5H529.5M18.5 259.5H529.5M18.5 64.5V259.5M44.5 64.5V259.5M70.5 64.5V259.5M95.5 64.5V259.5M121.5 64.5V259.5M146.5 64.5V259.5M172.5 64.5V259.5M197.5 64.5V259.5M223.5 64.5V259.5M248.5 64.5V259.5M274.5 64.5V259.5M299.5 64.5V259.5M325.5 64.5V259.5M351.5 64.5V259.5M376.5 64.5V259.5M402.5 64.5V259.5M427.5 64.5V259.5M453.5 64.5V259.5M478.5 64.5V259.5M504.5 64.5V259.5M529.5 64.5V259.5M18.5 64.5L44.5 124.5M70.5 64.5L44.5 124.5M70.5 64.5L95.5 124.5M121.5 64.5L95.5 124.5M121.5 64.5L146.5 124.5M172.5 64.5L146.5 124.5M172.5 64.5L197.5 124.5M223.5 64.5L197.5 124.5M223.5 64.5L248.5 124.5M274.5 64.5L248.5 124.5M274.5 64.5L299.5 124.5M325.5 64.5L299.5 124.5M325.5 64.5L351.5 124.5M376.5 64.5L351.5 124.5M376.5 64.5L402.5 124.5M427.5 64.5L402.5 124.5M427.5 64.5L453.5 124.5M478.5 64.5L453.5 124.5M478.5 64.5L504.5 124.5M529.5 64.5L504.5 124.5M44.5 124.5L18.5 191.5M44.5 124.5L70.5 191.5M95.5 124.5L70.5 191.5M95.5 124.5L121.5 191.5M146.5 124.5L121.5 191.5M146.5 124.5L172.5 191.5M197.5 124.5L172.5 191.5M197.5 124.5L223.5 191.5M248.5 124.5L223.5 191.5M248.5 124.5L274.5 191.5M299.5 124.5L274.5 191.5M299.5 124.5L325.5 191.5M351.5 124.5L325.5 191.5M351.5 124.5L376.5 191.5M402.5 124.5L376.5 191.5M402.5 124.5L427.5 191.5M453.5 124.5L427.5 191.5M453.5 124.5L478.5 191.5M504.5 124.5L478.5 191.5M504.5 124.5L529.5 191.5M18.5 191.5L44.5 259.5M70.5 191.5L44.5 259.5M70.5 191.5L95.5 259.5M121.5 191.5L95.5 259.5M121.5 191.5L146.5 259.5M172.5 191.5L146.5 259.5M172.5 191.5L197.5 259.5M223.5 191.5L197.5 259.5M223.5 191.5L248.5 259.5M274.5 191.5L248.5 259.5M274.5 191.5L299.5 259.5M325.5 191.5L299.5 259.5M325.5 191.5L351.5 259.5M376.5 191.5L351.5 259.5M376.5 191.5L402.5 259.5M427.5 191.5L402.5 259.5M427.5 191.5L453.5 259.5M478.5 191.5L453.5 259.5M478.5 191.5L504.5 259.5M529.5 191.5L504.5 259.5" stroke="#f4fff0" stroke-width="1.1" fill="none"/><rect x="17.0" y="63.0" width="3" height="3" fill="#fff"/><rect x="17.0" y="123.0" width="3" height="3" fill="#fff"/><rect x="17.0" y="190.0" width="3" height="3" fill="#fff"/><rect x="17.0" y="258.0" width="3" height="3" fill="#fff"/><rect x="43.0" y="63.0" width="3" height="3" fill="#fff"/><rect x="43.0" y="123.0" width="3" height="3" fill="#fff"/><rect x="43.0" y="190.0" width="3" height="3" fill="#fff"/><rect x="43.0" y="258.0" width="3" height="3" fill="#fff"/><rect x="69.0" y="63.0" width="3" height="3" fill="#fff"/><rect x="69.0" y="123.0" width="3" height="3" fill="#fff"/><rect x="69.0" y="190.0" width="3" height="3" fill="#fff"/><rect x="69.0" y="258.0" width="3" height="3" fill="#fff"/><rect x="94.0" y="63.0" width="3" height="3" fill="#fff"/><rect x="94.0" y="123.0" width="3" height="3" fill="#fff"/><rect x="94.0" y="190.0" width="3" height="3" fill="#fff"/><rect x="94.0" y="258.0" width="3" height="3" fill="#fff"/><rect x="120.0" y="63.0" width="3" height="3" fill="#fff"/><rect x="120.0" y="123.0" width="3" height="3" fill="#fff"/><rect x="120.0" y="190.0" width="3" height="3" fill="#fff"/><rect x="120.0" y="258.0" width="3" height="3" fill="#fff"/><rect x="145.0" y="63.0" width="3" height="3" fill="#fff"/><rect x="145.0" y="123.0" width="3" height="3" fill="#fff"/><rect x="145.0" y="190.0" width="3" height="3" fill="#fff"/><rect x="145.0" y="258.0" width="3" height="3" fill="#fff"/><rect x="171.0" y="63.0" width="3" height="3" fill="#fff"/><rect x="171.0" y="123.0" width="3" height="3" fill="#fff"/><rect x="171.0" y="190.0" width="3" height="3" fill="#fff"/><rect x="171.0" y="258.0" width="3" height="3" fill="#fff"/><rect x="196.0" y="63.0" width="3" height="3" fill="#fff"/><rect x="196.0" y="123.0" width="3" height="3" fill="#fff"/><rect x="196.0" y="190.0" width="3" height="3" fill="#fff"/><rect x="196.0" y="258.0" width="3" height="3" fill="#fff"/><rect x="222.0" y="63.0" width="3" height="3" fill="#fff"/><rect x="222.0" y="123.0" width="3" height="3" fill="#fff"/><rect x="222.0" y="190.0" width="3" height="3" fill="#fff"/><rect x="222.0" y="258.0" width="3" height="3" fill="#fff"/><rect x="247.0" y="63.0" width="3" height="3" fill="#fff"/><rect x="247.0" y="123.0" width="3" height="3" fill="#fff"/><rect x="247.0" y="190.0" width="3" height="3" fill="#fff"/><rect x="247.0" y="258.0" width="3" height="3" fill="#fff"/><rect x="273.0" y="63.0" width="3" height="3" fill="#fff"/><rect x="273.0" y="123.0" width="3" height="3" fill="#fff"/><rect x="273.0" y="190.0" width="3" height="3" fill="#fff"/><rect x="273.0" y="258.0" width="3" height="3" fill="#fff"/><rect x="298.0" y="63.0" width="3" height="3" fill="#fff"/><rect x="298.0" y="123.0" width="3" height="3" fill="#fff"/><rect x="298.0" y="190.0" width="3" height="3" fill="#fff"/><rect x="298.0" y="258.0" width="3" height="3" fill="#fff"/><rect x="324.0" y="63.0" width="3" height="3" fill="#fff"/><rect x="324.0" y="123.0" width="3" height="3" fill="#fff"/><rect x="324.0" y="190.0" width="3" height="3" fill="#fff"/><rect x="324.0" y="258.0" width="3" height="3" fill="#fff"/><rect x="350.0" y="63.0" width="3" height="3" fill="#fff"/><rect x="350.0" y="123.0" width="3" height="3" fill="#fff"/><rect x="350.0" y="190.0" width="3" height="3" fill="#fff"/><rect x="350.0" y="258.0" width="3" height="3" fill="#fff"/><rect x="375.0" y="63.0" width="3" height="3" fill="#fff"/><rect x="375.0" y="123.0" width="3" height="3" fill="#fff"/><rect x="375.0" y="190.0" width="3" height="3" fill="#fff"/><rect x="375.0" y="258.0" width="3" height="3" fill="#fff"/><rect x="401.0" y="63.0" width="3" height="3" fill="#fff"/><rect x="401.0" y="123.0" width="3" height="3" fill="#fff"/><rect x="401.0" y="190.0" width="3" height="3" fill="#fff"/><rect x="401.0" y="258.0" width="3" height="3" fill="#fff"/><rect x="426.0" y="63.0" width="3" height="3" fill="#fff"/><rect x="426.0" y="123.0" width="3" height="3" fill="#fff"/><rect x="426.0" y="190.0" width="3" height="3" fill="#fff"/><rect x="426.0" y="258.0" width="3" height="3" fill="#fff"/><rect x="452.0" y="63.0" width="3" height="3" fill="#fff"/><rect x="452.0" y="123.0" width="3" height="3" fill="#fff"/><rect x="452.0" y="190.0" width="3" height="3" fill="#fff"/><rect x="452.0" y="258.0" width="3" height="3" fill="#fff"/><rect x="477.0" y="63.0" width="3" height="3" fill="#fff"/><rect x="477.0" y="123.0" width="3" height="3" fill="#fff"/><rect x="477.0" y="190.0" width="3" height="3" fill="#fff"/><rect x="477.0" y="258.0" width="3" height="3" fill="#fff"/><rect x="503.0" y="63.0" width="3" height="3" fill="#fff"/><rect x="503.0" y="123.0" width="3" height="3" fill="#fff"/><rect x="503.0" y="190.0" width="3" height="3" fill="#fff"/><rect x="503.0" y="258.0" width="3" height="3" fill="#fff"/><rect x="528.0" y="63.0" width="3" height="3" fill="#fff"/><rect x="528.0" y="123.0" width="3" height="3" fill="#fff"/><rect x="528.0" y="190.0" width="3" height="3" fill="#fff"/><rect x="528.0" y="258.0" width="3" height="3" fill="#fff"/></svg><div style="position:absolute;left:16px;top:52px;width:526px;height:559px;box-shadow:inset 1px 1px #404040,inset -2px -2px #fff"></div><div class="btn chk" style="left:551px;top:62px;width:80px;height:18px;line-height:18px;"><span style="">Select</span></div><div class="btn" style="left:551px;top:82px;width:80px;height:18px;line-height:18px;"><span style="">Move</span></div><div class="btn" style="left:551px;top:102px;width:80px;height:18px;line-height:18px;"><span style="">Rotate</span></div><div class="btn" style="left:551px;top:122px;width:80px;height:18px;line-height:18px;"><span style="">Scale</span></div><div class="btn" style="left:551px;top:142px;width:80px;height:18px;line-height:18px;"><span style="">Region</span></div><div class="ed" style="left:551px;top:163px;width:80px;height:19px;line-height:19px;">Cylinder01</div><div class="btn" style="left:612px;top:165px;width:17px;height:15px;line-height:15px;"><span style=""></span></div><svg style="left:612px;top:165px" width="17" height="15"><path d="M4.5 6h7l-3.5 4z" fill="#000"/></svg><div class="ed" style="left:551px;top:193px;width:80px;height:19px;line-height:19px;">Front</div><div class="btn" style="left:612px;top:195px;width:17px;height:15px;line-height:15px;"><span style=""></span></div><svg style="left:612px;top:195px" width="17" height="15"><path d="M4.5 6h7l-3.5 4z" fill="#000"/></svg><div class="btn" style="left:551px;top:217px;width:80px;height:18px;line-height:18px;"><span style="">Remap</span></div><div class="cb" style="left:552px;top:260px"></div><div class="t" style="left:570px;top:260px;">Clamp</div><div class="cb" style="left:552px;top:279px"><svg width="13" height="13" style="position:absolute;left:0;top:0"><path d="M3 5.5 L5 7.5 L9.5 3 L9.5 5 L5 9.5 L3 7.5Z" fill="#000"/></svg></div><div class="t" style="left:570px;top:279px;">Redraw</div><div class="ed" style="left:551px;top:297px;width:29px;height:18px;line-height:18px;">1.0</div><div class="btn" style="left:586px;top:297px;width:45px;height:18px;line-height:18px;"><span style="">Scale</span></div></body></html>
